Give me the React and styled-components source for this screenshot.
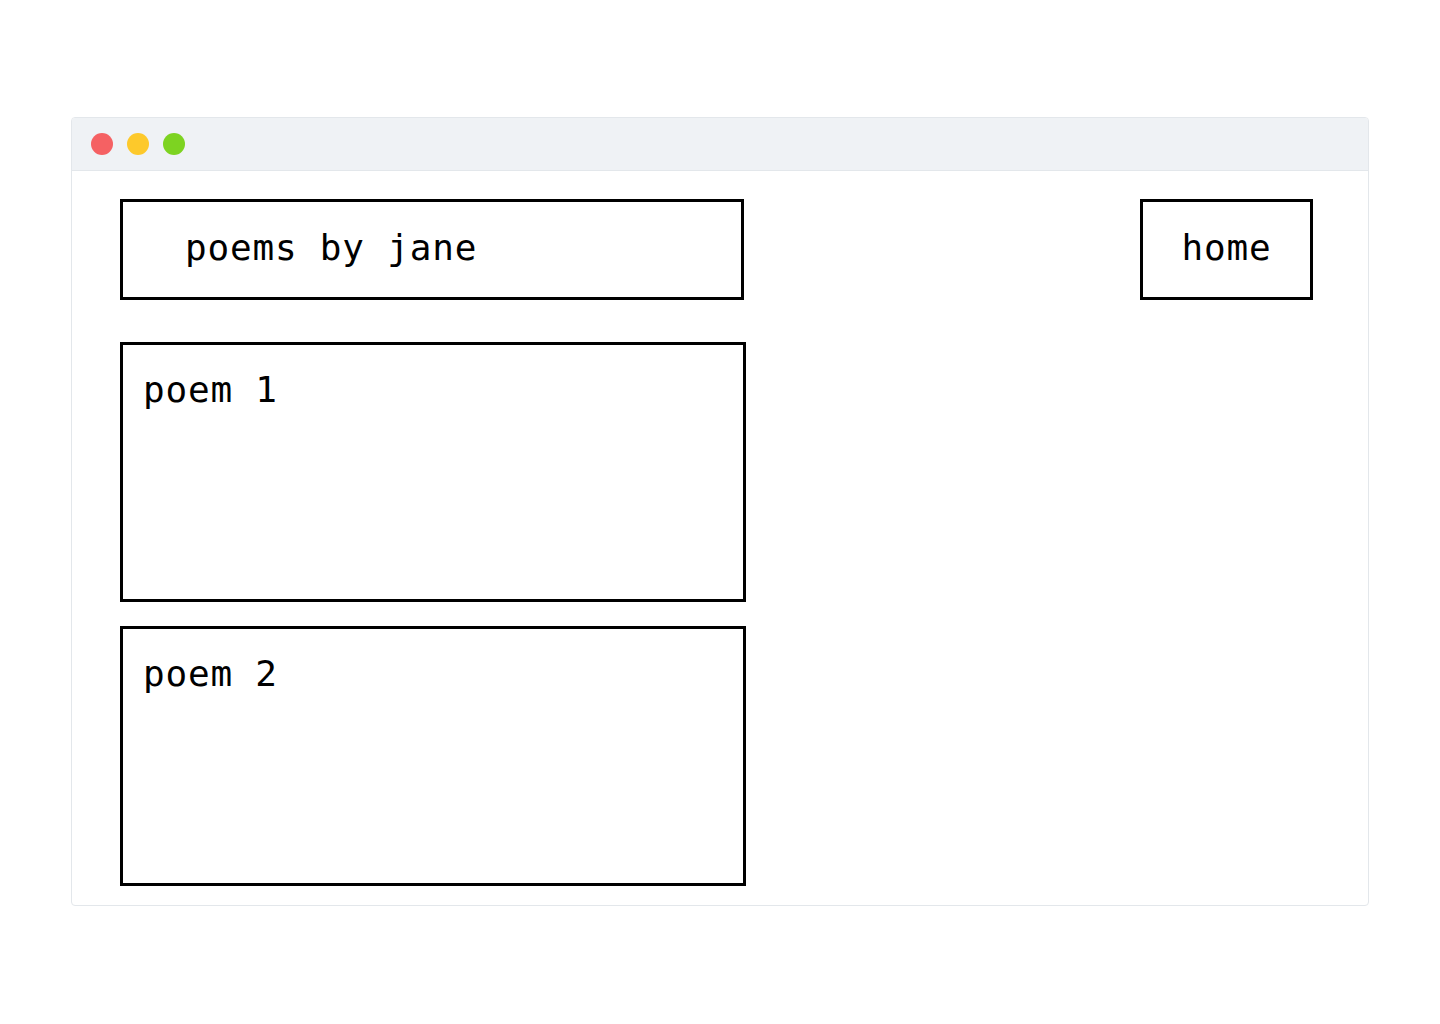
import React from "react";
import styled, { createGlobalStyle } from "styled-components";

const Global = createGlobalStyle`
  html, body { margin: 0; padding: 0; background: #ffffff; }
  body { font-family: "DejaVu Sans Mono", monospace; }
`;

const Page = styled.div`
  width: 1440px;
  height: 1024px;
  box-sizing: border-box;
  padding: 117px 71px 0 71px;
`;

const Window = styled.div`
  width: 1298px;
  height: 789px;
  box-sizing: border-box;
  border: 1px solid #e3e7eb;
  border-radius: 4px;
  overflow: hidden;
  display: flex;
  flex-direction: column;
  background: #fff;
`;

const TitleBar = styled.div`
  height: 52px;
  flex: none;
  background: #eff2f5;
  border-bottom: 1px solid #e3e7eb;
  display: flex;
  align-items: center;
  gap: 14px;
  padding-left: 19px;
`;

const Dot = styled.span`
  width: 22px;
  height: 22px;
  border-radius: 50%;
  background: ${(p) => p.$color};
`;

const Content = styled.div`
  flex: 1;
  padding: 28px 55px 0 48px;
  display: flex;
  flex-direction: column;
  gap: 42px;
`;

const Header = styled.div`
  display: flex;
  justify-content: space-between;
  align-items: flex-start;
`;

const Box = styled.div`
  border: 3px solid #000;
  box-sizing: border-box;
  font-family: "DejaVu Sans Mono", monospace;
  font-size: 36px;
  letter-spacing: 0.8px;
  color: #000;
  line-height: 1.2;
`;

const Title = styled(Box)`
  width: 624px;
  height: 101px;
  display: flex;
  align-items: center;
  padding: 0 0 4px 62px;
`;

const Nav = styled(Box)`
  width: 173px;
  height: 101px;
  display: flex;
  align-items: center;
  justify-content: center;
  padding-bottom: 4px;
`;

const List = styled.div`
  display: flex;
  flex-direction: column;
  gap: 24px;
`;

const Card = styled(Box)`
  width: 626px;
  height: 260px;
  padding: 23px 0 0 20px;
`;

export default function App() {
  return (
    <>
      <Global />
      <Page>
        <Window>
          <TitleBar>
            <Dot $color="#f56163" />
            <Dot $color="#fdc92b" />
            <Dot $color="#7dd321" />
          </TitleBar>
          <Content>
            <Header>
              <Title>poems by jane</Title>
              <Nav>home</Nav>
            </Header>
            <List>
              <Card>poem 1</Card>
              <Card>poem 2</Card>
            </List>
          </Content>
        </Window>
      </Page>
    </>
  );
}
